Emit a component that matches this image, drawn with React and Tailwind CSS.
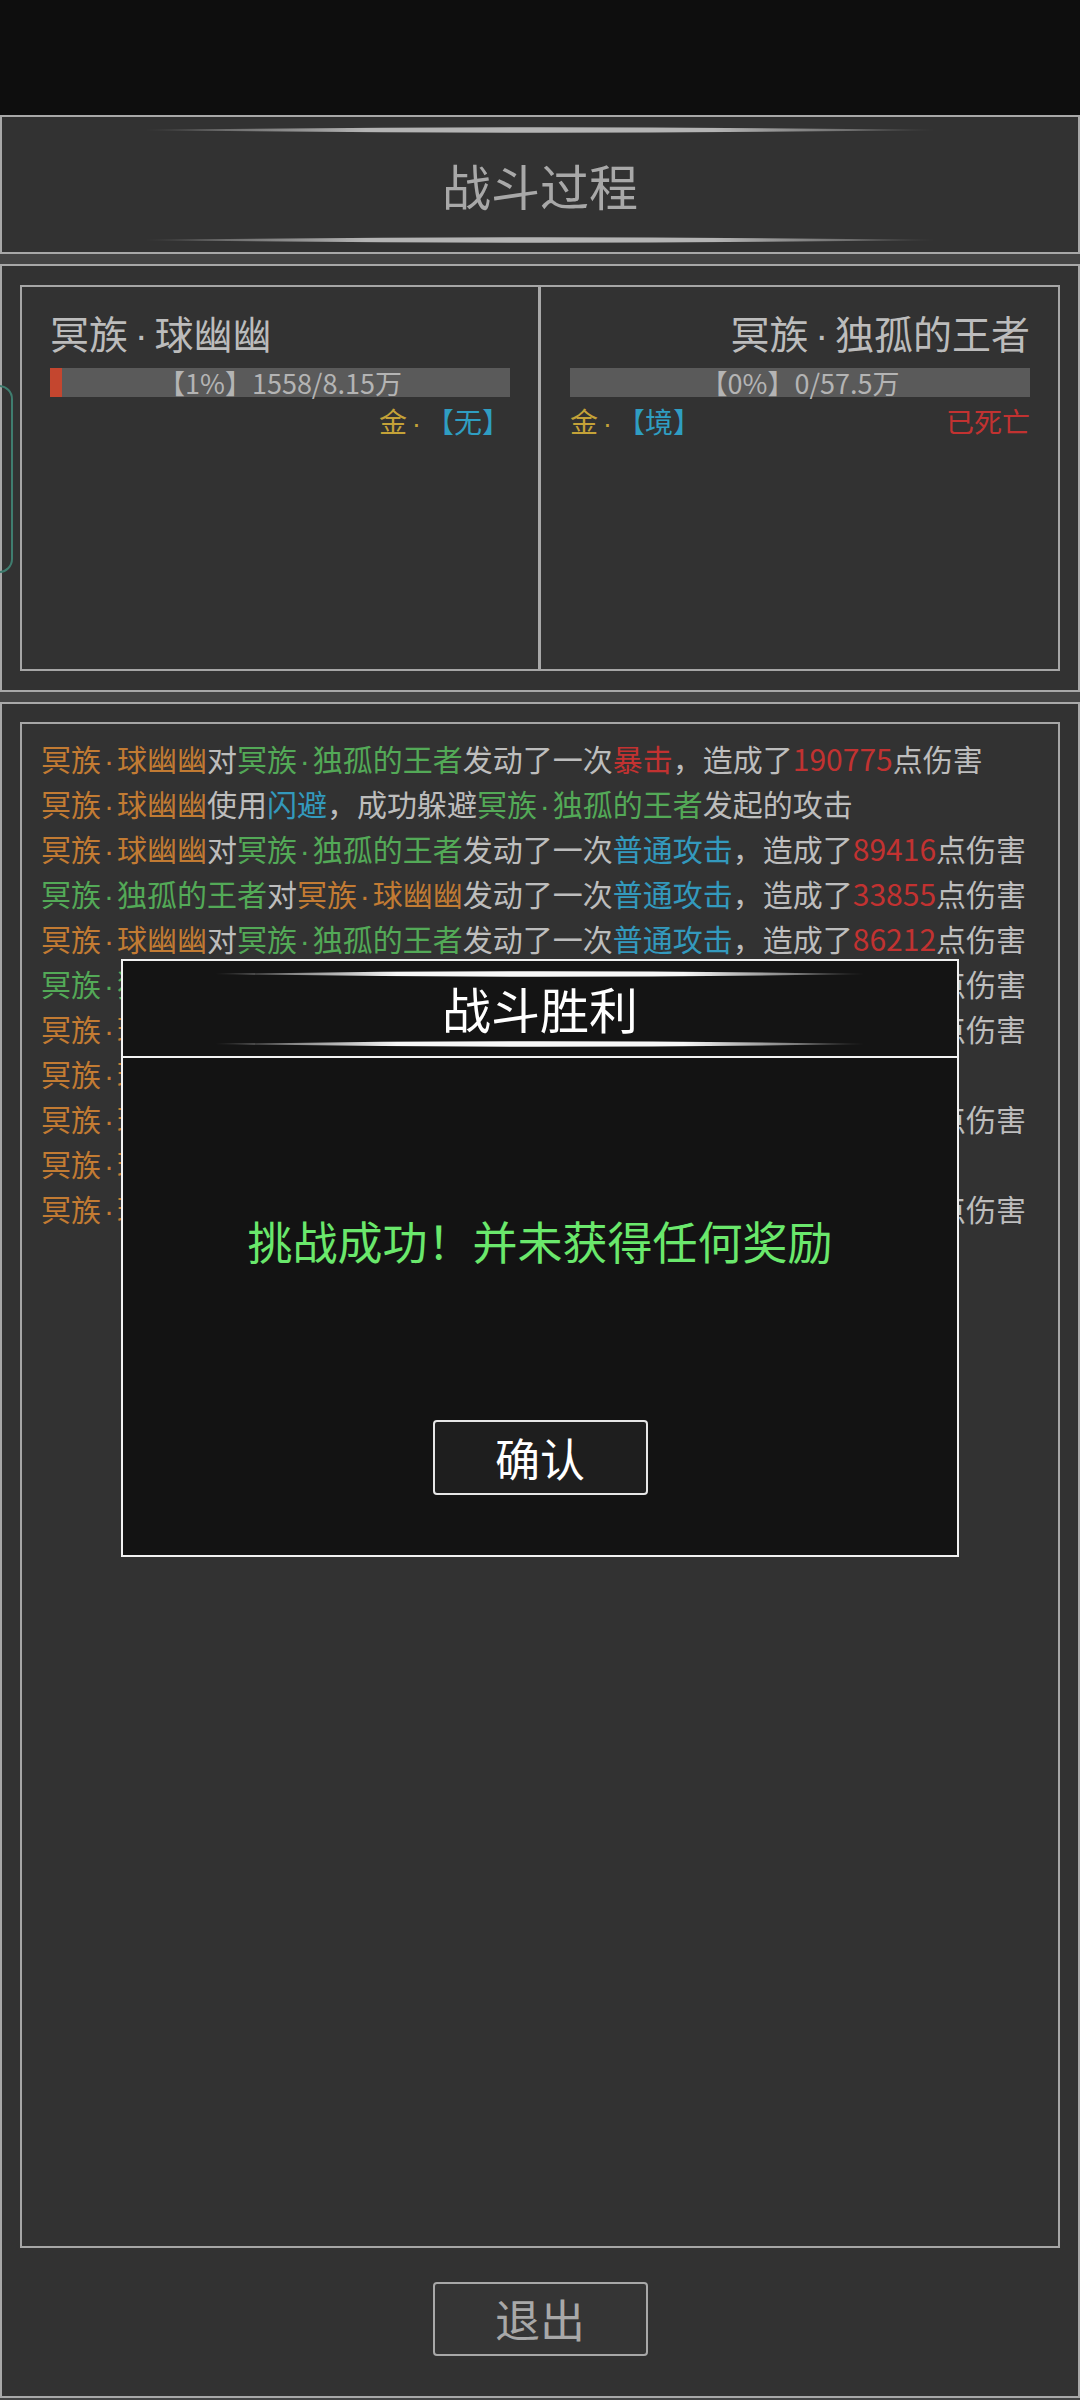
import React from "react";

const FONT = "font-['Noto_Sans_CJK_SC','Noto_Sans',sans-serif]";

function Streak({ width, color, className }) {
  const id = "g" + width + color.replace("#", "");
  return (
    <svg width={width} height="6" viewBox={`0 0 ${width} 6`} className={className} style={{ display: "block" }}>
      <defs>
        <linearGradient id={id} x1="0" x2="1" y1="0" y2="0">
          <stop offset="0" stopColor={color} stopOpacity="0.15" />
          <stop offset="0.12" stopColor={color} stopOpacity="0.5" />
          <stop offset="0.28" stopColor={color} stopOpacity="1" />
          <stop offset="0.72" stopColor={color} stopOpacity="1" />
          <stop offset="0.88" stopColor={color} stopOpacity="0.5" />
          <stop offset="1" stopColor={color} stopOpacity="0.15" />
        </linearGradient>
      </defs>
      <path d={`M0 3 Q${width / 2} -2.4 ${width} 3 Q${width / 2} 8.4 0 3Z`} fill={`url(#${id})`} />
    </svg>
  );
}

const Dot = ({ wide }) => (
  <span
    className={`inline-flex justify-center leading-none font-['Liberation_Sans','DejaVu_Sans',sans-serif] ${
      wide ? "w-[0.68em]" : "w-[0.53em]"
    }`}
  >
    <span className="leading-none">·</span>
  </span>
);

const O = ({ children }) => <span className="text-[#c27b33]">{children}</span>;
const G = ({ children }) => <span className="text-[#53a957]">{children}</span>;
const B = ({ children }) => <span className="text-[#3399bd]">{children}</span>;
const R = ({ children }) => <span className="text-[#c23231]">{children}</span>;

const Qiu = () => (
  <O>
    冥族<Dot />球幽幽
  </O>
);
const Du = () => (
  <G>
    冥族<Dot />独孤的王者
  </G>
);

function Attack({ a, b, num, skill = "普通攻击", crit }) {
  return (
    <div className="h-[45px] whitespace-nowrap">
      {a}对{b}发动了一次{crit ? <R>{skill}</R> : <B>{skill}</B>}，造成了<R>{num}</R>点伤害
    </div>
  );
}

function Dodge() {
  return (
    <div className="h-[45px] whitespace-nowrap">
      <Qiu />使用<B>闪避</B>，成功躲避<Du />发起的攻击
    </div>
  );
}

export default function App() {
  return (
    <div className={`relative w-[1080px] h-[2400px] overflow-hidden bg-[#444444] ${FONT}`}>
      <div className="h-[115px] bg-[#0e0e0e]" />

      {/* header panel */}
      <div className="h-[139px] border-2 border-[#a8a8a8] bg-[#323232] flex flex-col items-center">
        <Streak width={790} color="#b4b4b4" className="mt-[10px]" />
        <div className="mt-[24px] text-[49px] leading-[56px] text-[#a8a8a8]">战斗过程</div>
        <Streak width={790} color="#b4b4b4" className="mt-[24px]" />
      </div>

      <div className="h-[10px]" />

      {/* fighters panel */}
      <div className="h-[428px] border-2 border-[#a8a8a8] bg-[#323232] px-[18px] pt-[19px]">
        <div className="h-[386px] border-2 border-[#a6a6a6] flex">
          <div className="w-[516px] px-[28px] pt-[23px]">
            <div className="h-[44px] text-[39px] leading-[44px] text-[#bcbcbc] whitespace-nowrap">
              冥族<Dot wide />球幽幽
            </div>
            <div className="relative mt-[14px] h-[29px] bg-[#5a5a5a]">
              <div className="absolute left-0 top-0 h-[29px] w-[12px] bg-[#c4462f]" />
              <div className="relative text-center text-[27px] leading-[29px] text-[#b4b4b4] whitespace-nowrap">
                【1%】1558/8.15万
              </div>
            </div>
            <div className="mt-[4px] h-[40px] flex justify-end text-[28px] leading-[40px]">
              <span className="text-[#c4a238]">
                金<Dot wide />
              </span>
              <span className="text-[#2f9ec2]">【无】</span>
            </div>
          </div>
          <div className="flex-1 border-l-[3px] border-[#a8a8a8] pl-[29px] pr-[28px] pt-[23px]">
            <div className="h-[44px] text-right text-[39px] leading-[44px] text-[#bcbcbc] whitespace-nowrap">
              冥族<Dot wide />独孤的王者
            </div>
            <div className="relative mt-[14px] h-[29px] bg-[#5a5a5a]">
              <div className="text-center text-[27px] leading-[29px] text-[#b4b4b4] whitespace-nowrap">
                【0%】0/57.5万
              </div>
            </div>
            <div className="mt-[4px] h-[40px] flex justify-between text-[28px] leading-[40px]">
              <div>
                <span className="text-[#c4a238]">
                  金<Dot wide />
                </span>
                <span className="text-[#2f9ec2]">【境】</span>
              </div>
              <span className="text-[#c23231]">已死亡</span>
            </div>
          </div>
        </div>
      </div>

      <div className="h-[10px]" />

      {/* log panel */}
      <div className="h-[1696px] border-2 border-[#a8a8a8] bg-[#323232] px-[18px] pt-[18px] flex flex-col items-center">
        <div className="w-full h-[1526px] border-2 border-[#a6a6a6] pl-[19px] pt-[12px] text-[30px] leading-[45px] text-[#bdbdbd]">
          <Attack a={<Qiu />} b={<Du />} num="190775" skill="暴击" crit />
          <Dodge />
          <Attack a={<Qiu />} b={<Du />} num="89416" />
          <Attack a={<Du />} b={<Qiu />} num="33855" />
          <Attack a={<Qiu />} b={<Du />} num="86212" />
          <Attack a={<Du />} b={<Qiu />} num="31207" />
          <Attack a={<Qiu />} b={<Du />} num="88731" />
          <Dodge />
          <Attack a={<Qiu />} b={<Du />} num="90125" />
          <Dodge />
          <Attack a={<Qiu />} b={<Du />} num="91844" />
        </div>
        <button className="mt-[34px] w-[215px] h-[74px] rounded-[4px] border-2 border-[#a8a8a8] bg-[#353535] text-[45px] leading-[70px] text-[#a8a8a8]">
          退出
        </button>
      </div>

      {/* left side tab peeking in */}
      <div className="absolute left-[-30px] top-[385px] w-[43px] h-[188px] rounded-[14px] border-2 border-[#3f7d6f]" />

      {/* victory dialog */}
      <div className="absolute left-[121px] top-[959px] w-[838px] h-[598px] border-2 border-[#f2f2f2] bg-[#131313] flex flex-col">
        <div className="h-[95px] flex flex-col items-center bg-[#141414]">
          <Streak width={650} color="#f8f8f8" className="mt-[10px]" />
          <div className="mt-[3px] text-[49px] leading-[56px] text-white">战斗胜利</div>
          <Streak width={650} color="#f8f8f8" className="mt-[5px]" />
        </div>
        <div className="h-[2px] bg-[#f2f2f2]" />
        <div className="flex-1 flex flex-col items-center">
          <div className="mt-[156px] text-[45px] leading-[54px] text-[#6ae86c] whitespace-nowrap">
            挑战成功！并未获得任何奖励
          </div>
          <button className="mt-[152px] w-[215px] h-[75px] rounded-[4px] border-2 border-[#e6e6e6] bg-[#1e1e1e] text-[45px] leading-[71px] text-white">
            确认
          </button>
        </div>
      </div>
    </div>
  );
}
